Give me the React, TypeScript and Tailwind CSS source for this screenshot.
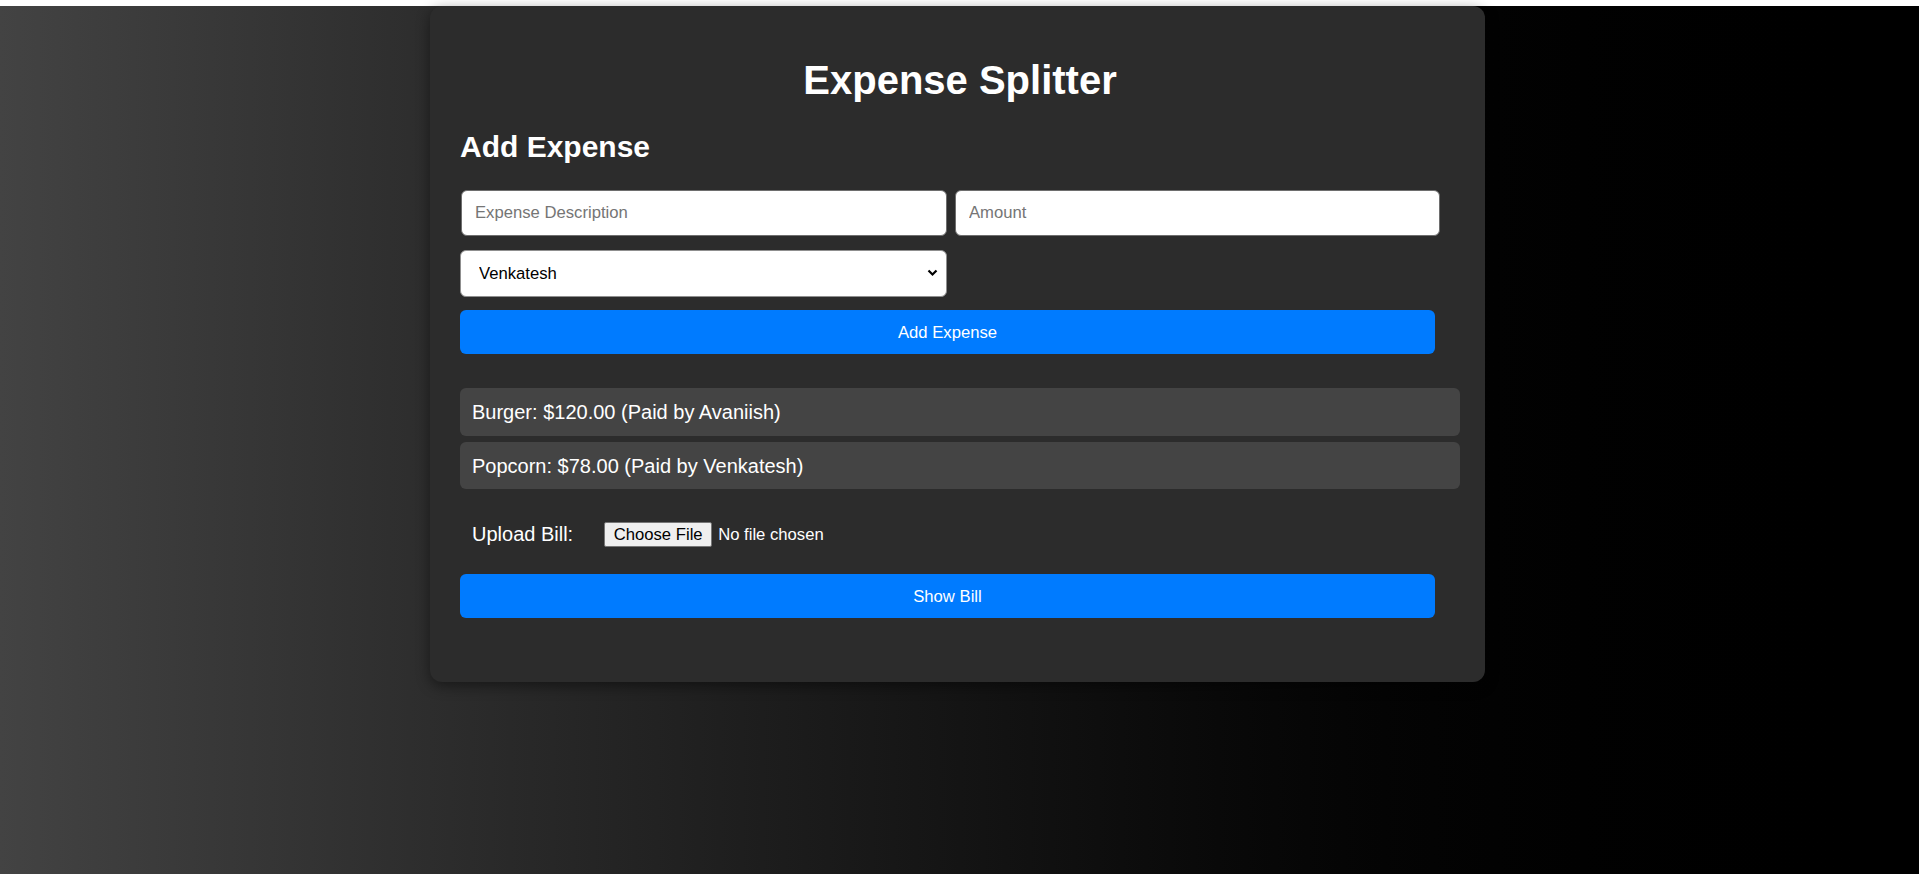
import React from "react";

const expenses = [
  { desc: "Burger", amount: 120, payer: "Avaniish" },
  { desc: "Popcorn", amount: 78, payer: "Venkatesh" },
];

export default function App() {
  return (
    <div className="h-[874px] bg-white pt-[6px] font-['Liberation_Sans',Arial,sans-serif] overflow-hidden">
      <div className="h-[868px] bg-gradient-to-r from-[#434343] to-[#000000] flex justify-center pr-[4px]">
        <div className="w-[1055px] h-[676px] bg-[#2c2c2c] rounded-[12px] shadow-[0_4px_14px_rgba(0,0,0,0.45)] pl-[30px] pr-[25px] pt-[51px] flex flex-col">
          <h1 className="text-[40px] leading-[46px] font-bold text-white text-center">Expense Splitter</h1>
          <h2 className="mt-[27px] text-[30px] leading-[34px] font-bold text-white">Add Expense</h2>

          <div className="mt-[26px] flex">
            <input
              type="text"
              placeholder="Expense Description"
              className="ml-[1px] w-[486px] h-[46px] bg-white rounded-[6px] border-[1.5px] border-[#6e6e6e] pl-[13px] text-[16.67px] text-black placeholder:text-[#757575] outline-none"
            />
            <input
              type="number"
              placeholder="Amount"
              className="ml-[8px] w-[485px] h-[46px] bg-white rounded-[6px] border-[1.5px] border-[#6e6e6e] pl-[13px] text-[16.67px] text-black placeholder:text-[#757575] outline-none"
            />
          </div>

          <div className="mt-[14px] relative w-[487px] h-[47px]">
            <select
              defaultValue="Venkatesh"
              className="w-full h-full appearance-none bg-white rounded-[6px] border border-[#8f8f8f] pl-[18px] text-[16.67px] text-black outline-none"
            >
              <option>Avaniish</option>
              <option>Venkatesh</option>
            </select>
            <svg
              className="absolute right-[9px] top-[19px] pointer-events-none"
              width="11"
              height="8"
              viewBox="0 0 11 8"
            >
              <polyline points="1.5,1.5 5.5,5.5 9.5,1.5" fill="none" stroke="#000" strokeWidth="2.2" />
            </svg>
          </div>

          <button className="mt-[13px] w-[975px] h-[44px] bg-[#007bff] rounded-[6px] text-white text-[16.67px]">
            Add Expense
          </button>

          <ul className="mt-[34px] flex flex-col gap-[6px]">
            {expenses.map((e, i) => (
              <li
                key={e.desc}
                className={`w-[1000px] ${i === 0 ? "h-[48px]" : "h-[47px]"} bg-[#444444] rounded-[6px] pl-[12px] flex items-center text-white text-[20px]`}
              >
                {e.desc}: ${e.amount.toFixed(2)} (Paid by {e.payer})
              </li>
            ))}
          </ul>

          <div className="mt-[26px] h-[38px] pl-[12px] flex items-center">
            <span className="text-white text-[20px]">Upload Bill:</span>
            <label className="ml-[31px] flex items-center cursor-pointer">
              <span className="w-[108px] h-[25px] bg-[#efefef] border border-[#767676] rounded-[2px] text-black text-[16.67px] flex items-center justify-center">
                Choose File
              </span>
              <span className="ml-[6px] text-white text-[16.67px]">No file chosen</span>
            </label>
          </div>

          <button className="mt-[21px] w-[975px] h-[44px] bg-[#007bff] rounded-[6px] text-white text-[16.67px]">
            Show Bill
          </button>
        </div>
      </div>
    </div>
  );
}
